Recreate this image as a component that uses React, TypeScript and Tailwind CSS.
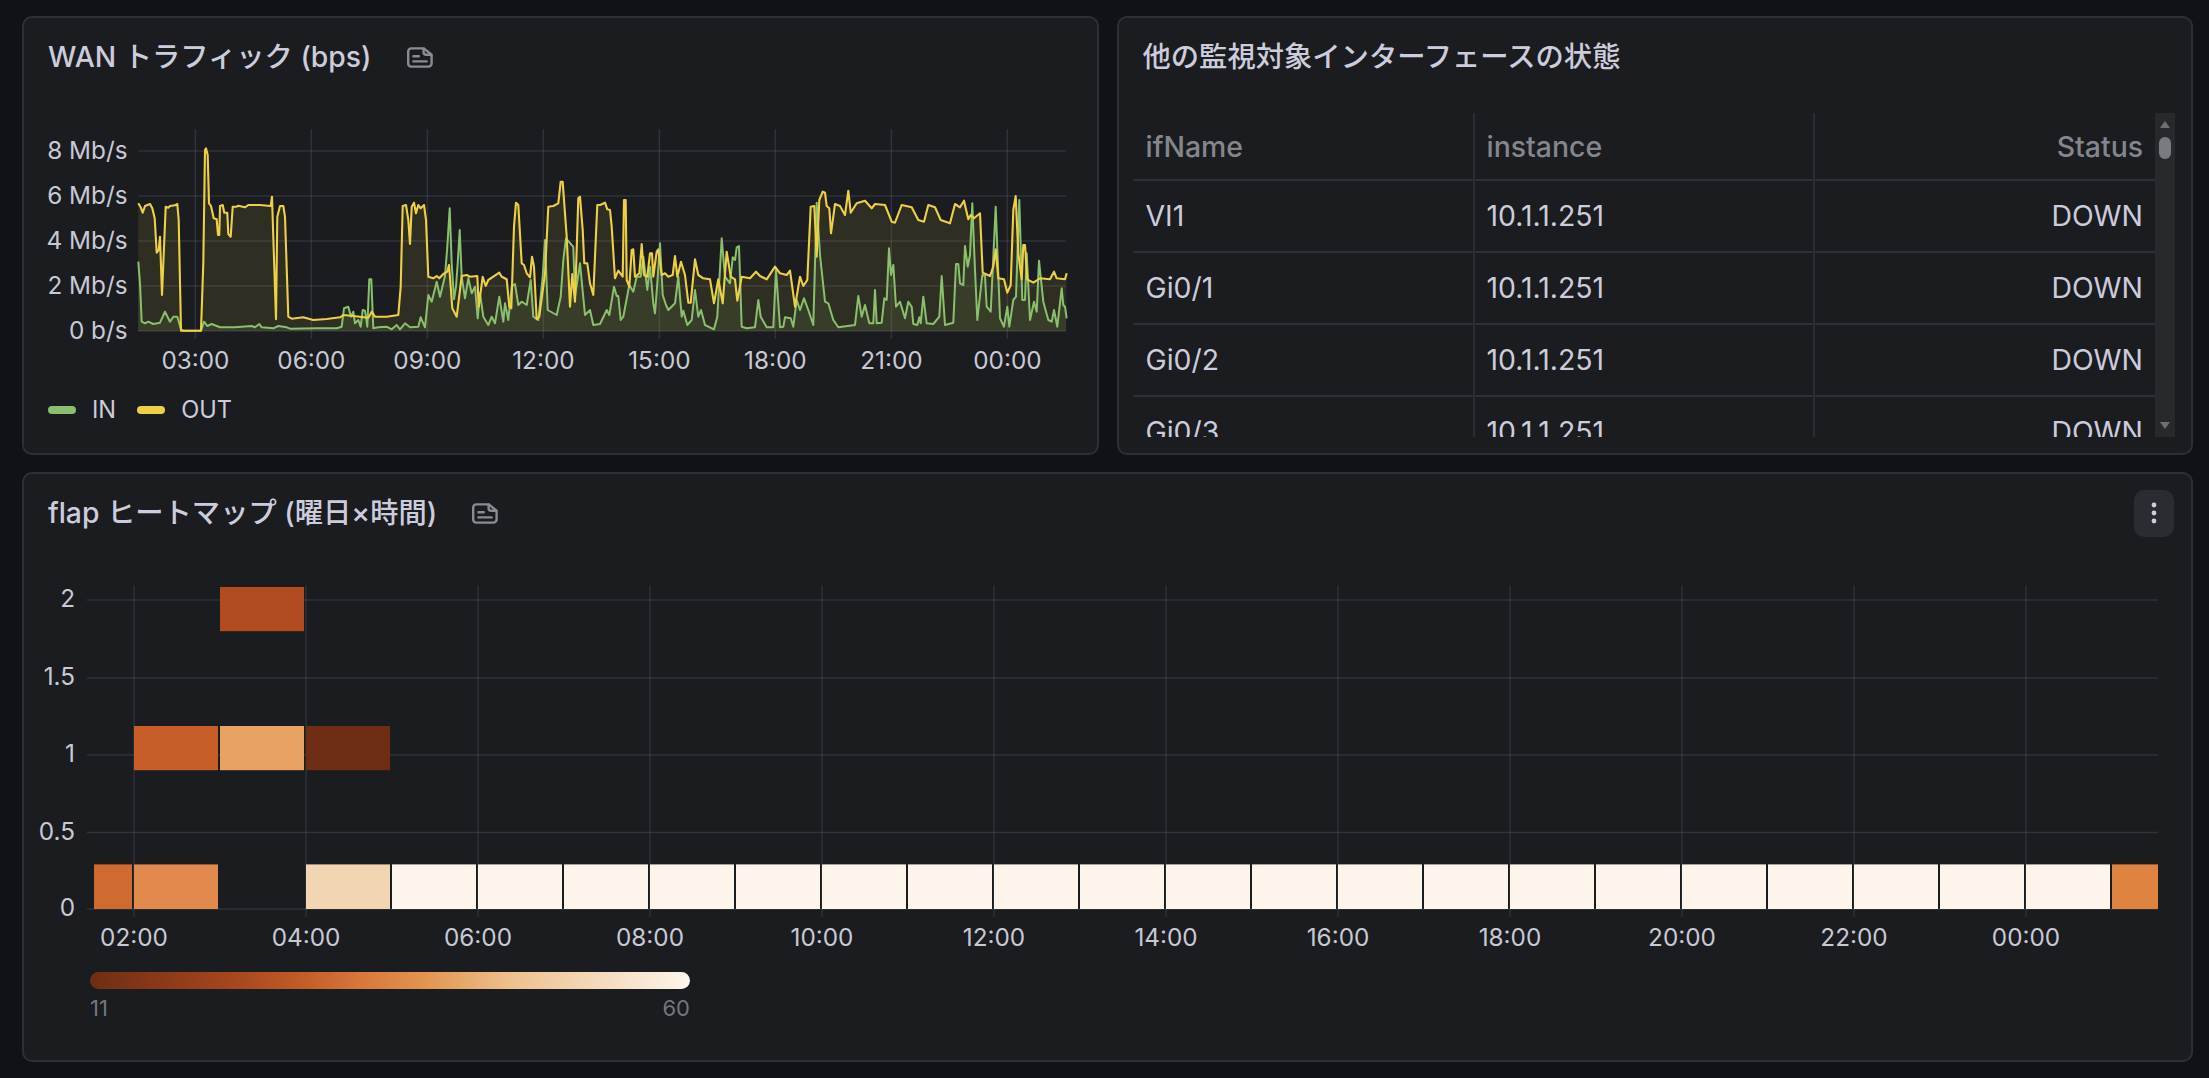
import React from 'react';

// traced from the WAN chart, [x, y] pairs in two 3x strips
const OUT_A = [55,250,62,262,68,278,75,258,90,252,97,265,104,295,110,398,116,390,120,350,126,525,137,260,145,263,150,258,165,256,172,252,176,300,183,632,243,632,250,430,255,90,258,85,263,105,267,250,273,258,281,295,290,298,294,345,298,345,300,258,308,255,313,278,322,278,325,342,332,350,338,260,350,260,355,257,375,262,385,255,420,255,452,258,456,230,460,350,468,598,472,290,480,258,490,258,495,290,505,590,515,596,550,592,580,600,620,597,660,592,670,585,700,588,745,593,755,575,765,590,800,590,835,585,842,500,848,258,858,255,865,300,870,372,875,260,882,248,888,280,895,255,902,265,912,255,918,300,925,470,940,475,950,468,958,475,970,462,982,455,987,435,992,500,997,565,1010,590,1025,468,1040,465,1050,470,1072,468,1076,560,1088,470,1097,498,1105,480,1120,470,1138,458,1145,470,1160,478,1168,560,1174,565,1182,320,1188,248,1195,255,1205,430,1212,435,1220,460,1230,472,1236,410,1242,440,1250,598,1258,590,1275,460,1285,260,1300,258,1315,250,1322,185,1328,185,1332,240,1340,350,1350,560,1357,462,1365,545,1375,235,1380,230,1388,330,1393,430,1402,430,1410,490,1420,525,1432,255];
const OUT_B = [0,255,15,248,22,268,30,270,35,320,45,475,55,452,68,470,72,240,77,240,80,480,88,500,95,390,100,388,105,470,118,460,125,372,132,465,142,470,150,400,156,400,160,470,170,395,175,388,185,465,195,460,205,470,218,465,225,408,232,470,243,425,255,465,265,548,272,548,285,418,295,465,310,475,330,478,342,550,355,478,368,550,380,395,392,470,405,478,412,542,425,470,450,475,468,455,480,468,500,478,525,440,540,460,560,465,570,452,585,560,600,470,610,498,622,480,632,260,643,258,650,410,658,240,668,215,675,218,680,258,688,265,693,340,705,252,720,258,735,285,745,212,752,278,770,250,795,242,815,265,825,252,855,255,875,305,885,308,905,255,935,262,955,300,972,305,985,255,1005,262,1022,300,1050,310,1065,252,1080,262,1092,242,1105,298,1112,285,1122,295,1140,280,1148,458,1170,468,1180,440,1187,388,1195,475,1212,478,1222,518,1232,495,1240,270,1247,228,1255,400,1265,478,1270,375,1275,375,1282,478,1300,488,1320,475,1350,478,1362,455,1370,475,1395,478,1400,460];
const IN_A = [55,425,60,490,65,605,75,610,85,605,100,612,120,608,135,575,150,605,160,590,172,590,183,628,190,632,243,632,252,605,262,618,275,612,300,622,345,622,395,618,405,622,418,612,425,622,460,625,475,618,500,622,510,626,590,625,650,625,665,620,672,565,685,560,693,590,700,575,705,610,715,600,722,620,728,570,735,572,742,620,748,478,754,478,760,625,775,622,800,620,815,628,830,615,840,628,855,610,870,622,895,620,902,592,915,622,925,525,935,545,950,485,960,530,975,468,982,380,989,265,995,430,1002,538,1008,500,1013,430,1019,330,1025,470,1035,535,1045,475,1055,520,1065,500,1073,595,1080,520,1090,590,1105,615,1115,590,1125,610,1138,530,1150,605,1155,550,1165,600,1175,500,1185,492,1195,555,1205,545,1220,555,1232,480,1240,590,1255,600,1268,470,1275,360,1283,570,1310,585,1322,530,1330,420,1338,355,1355,375,1360,380,1365,530,1380,430,1395,585,1410,570,1420,615];
const IN_B = [0,612,20,570,28,585,42,500,50,528,55,528,62,600,70,590,88,495,100,515,110,470,122,470,130,410,142,510,150,440,160,550,165,580,172,490,180,370,188,525,198,555,205,570,225,550,235,470,245,590,250,572,262,615,275,600,285,510,295,590,303,570,315,615,342,628,352,590,365,355,375,470,390,490,398,412,405,420,410,382,417,378,425,620,440,625,465,622,475,540,482,590,500,622,520,622,528,450,540,622,550,620,555,592,572,595,580,620,590,540,600,570,612,535,625,570,640,615,650,248,660,405,675,545,685,550,700,600,715,622,765,615,775,528,785,590,795,555,808,610,820,610,825,510,830,610,845,608,853,535,860,540,867,385,873,465,880,435,888,560,900,545,915,595,925,545,935,560,940,612,952,615,958,592,962,610,970,530,980,610,1000,612,1018,590,1025,468,1035,615,1060,608,1068,432,1075,432,1080,490,1090,495,1095,378,1103,440,1110,405,1117,250,1125,450,1132,600,1147,465,1155,468,1160,560,1172,575,1187,260,1200,595,1212,620,1222,560,1228,620,1240,540,1248,530,1258,240,1267,540,1275,540,1280,400,1290,600,1302,545,1310,575,1317,422,1330,545,1345,600,1355,605,1362,570,1372,620,1385,505,1390,555,1395,560,1400,595];

function toPoints(a: number[], b: number[]) {
  const out: string[] = [];
  for (let i = 0; i < a.length; i += 2) out.push(`${(120 + a[i] / 3).toFixed(1)},${(120 + a[i + 1] / 3).toFixed(1)}`);
  for (let i = 0; i < b.length; i += 2) out.push(`${(600 + b[i] / 3).toFixed(1)},${(120 + b[i + 1] / 3).toFixed(1)}`);
  return out.join(' ');
}

const outLine = toPoints(OUT_A, OUT_B);
const inLine = toPoints(IN_A, IN_B);

const GRID = '#f0faff';
const LABEL = '#c8c9d5';

const WAN_Y = [['8 Mb/s', 151], ['6 Mb/s', 196], ['4 Mb/s', 241], ['2 Mb/s', 286], ['0 b/s', 331]] as const;
const WAN_X = ['03:00', '06:00', '09:00', '12:00', '15:00', '18:00', '21:00', '00:00'];

const HEAT_Y = [['2', 600], ['1.5', 678], ['1', 755], ['0.5', 832.5], ['0', 909]] as const;
const HEAT_X = ['02:00', '04:00', '06:00', '08:00', '10:00', '12:00', '14:00', '16:00', '18:00', '20:00', '22:00', '00:00'];

// k = hour slot counted from 02:00
const HEAT_CELLS: { k: number; row: number; color: string }[] = [
  { k: 1, row: 2, color: '#b04c20' },
  { k: 0, row: 1, color: '#c75e29' },
  { k: 1, row: 1, color: '#e8a263' },
  { k: 2, row: 1, color: '#6f2d13' },
  { k: 0, row: 0, color: '#e28a4d' },
  { k: 2, row: 0, color: '#f2d5b3' },
  ...Array.from({ length: 20 }, (_, i) => ({ k: i + 3, row: 0, color: '#fdf5ec' })),
  { k: 23, row: 0, color: '#de8340' },
];
const ROW_TOP: Record<number, number> = { 2: 587, 1: 726, 0: 864.4 };

const ROWS = ['VI1', 'Gi0/1', 'Gi0/2', 'Gi0/3'];

function NoteIcon() {
  return (
    <svg viewBox="0 0 26 21" className="w-[26px] h-[21px] shrink-0" fill="none" stroke="#8b8c92" strokeWidth="2.4" strokeLinecap="round" strokeLinejoin="round">
      <path d="M4.2 1.4h12.6l7.8 6.4v8.6a3.2 3.2 0 0 1-3.2 3.2H4.2A3 3 0 0 1 1.2 16.4V4.4a3 3 0 0 1 3-3z" />
      <path d="M16.6 1.6v3.6a2.6 2.6 0 0 0 2.6 2.6h5" />
      <path d="M6.4 9.2h5.4M6.4 14.4h13.2" />
    </svg>
  );
}

function Panel({ title, note, className, children, menu }: { title: string; note?: boolean; className: string; children: React.ReactNode; menu?: boolean }) {
  return (
    <section className={`rounded-[10px] border-2 border-[#2d2f34] bg-[#1a1c20] flex flex-col ${className}`}>
      <header className="h-[78px] shrink-0 flex items-center pl-[24px] pr-[17px]">
        <h2 className="text-[28.3px] font-medium text-[#ccccdc] leading-none whitespace-nowrap">{title}</h2>
        {note && <span className="ml-[35px] flex"><NoteIcon /></span>}
        {menu && (
          <button className="ml-auto w-[40px] h-[47px] rounded-[10px] bg-[#2a2c31] flex items-center justify-center">
            <svg viewBox="0 0 6 22" className="w-[6px] h-[22px]" fill="#ccccdc">
              <circle cx="3" cy="3" r="2.4" />
              <circle cx="3" cy="11" r="2.4" />
              <circle cx="3" cy="19" r="2.4" />
            </svg>
          </button>
        )}
      </header>
      {children}
    </section>
  );
}

function WanChart() {
  return (
    <svg viewBox="24 96 1073 280" className="block w-[1073px] h-[280px] shrink-0 text-[24.3px]">
      <g stroke={GRID} strokeOpacity="0.1" strokeWidth="1.5">
        {WAN_Y.map(([, y]) => <line key={y} x1="138" x2="1066" y1={y} y2={y} />)}
        {WAN_X.map((_, i) => <line key={i} x1={195.4 + i * 116} x2={195.4 + i * 116} y1="129" y2="339" />)}
      </g>
      <polygon points={`138,331 ${outLine} 1066,331`} fill="#eed045" fillOpacity="0.1" />
      <polygon points={`138,331 ${inLine} 1066,331`} fill="#8ac06d" fillOpacity="0.1" />
      <polyline points={inLine} fill="none" stroke="#8ac06d" strokeWidth="2" strokeLinejoin="round" />
      <polyline points={outLine} fill="none" stroke="#eed045" strokeWidth="2.1" strokeLinejoin="round" />
      <g fill={LABEL}>
        {WAN_Y.map(([t, y]) => <text key={t} x="127.5" y={y - 1.5} textAnchor="end" dominantBaseline="central">{t}</text>)}
        {WAN_X.map((t, i) => <text key={t} x={195.4 + i * 116} y="360" textAnchor="middle" dominantBaseline="central">{t}</text>)}
      </g>
    </svg>
  );
}

function HeatChart() {
  return (
    <svg viewBox="24 552 2167 398" className="block w-[2167px] h-[398px] shrink-0 text-[24.3px]">
      <g stroke={GRID} strokeOpacity="0.1" strokeWidth="1.3">
        {HEAT_Y.map(([, y]) => <line key={y} x1="87" x2="2158" y1={y} y2={y} />)}
        {HEAT_X.map((_, i) => <line key={i} x1={134 + i * 172} x2={134 + i * 172} y1="585" y2="917" />)}
      </g>
      <rect x="94" y="864.4" width="38" height="44.6" fill="#cf6b30" />
      {HEAT_CELLS.map((c) => (
        <rect key={`${c.k}-${c.row}`} x={134 + c.k * 86} y={ROW_TOP[c.row]} width={c.k === 23 ? 46 : 84} height={c.row === 0 ? 44.6 : 44.2} fill={c.color} />
      ))}
      <g fill={LABEL}>
        {HEAT_Y.map(([t, y]) => <text key={t} x="75" y={y - 2} textAnchor="end" dominantBaseline="central">{t}</text>)}
        {HEAT_X.map((t, i) => <text key={t} x={134 + i * 172} y="937" textAnchor="middle" dominantBaseline="central">{t}</text>)}
      </g>
    </svg>
  );
}

function StatusTable() {
  const cell = 'pl-[12px] first:pl-[13px] pr-[12px] border-r-2 border-[#2a2c31] last:border-r-0';
  return (
    <div className="mt-[17px] ml-[14px] mr-[16px] h-[324px] flex">
      <div className="flex-1 min-w-0 overflow-hidden">
        <table className="w-full table-fixed border-collapse text-[28.4px] text-[#ccccdc]">
          <colgroup>
            <col className="w-[341px]" />
            <col className="w-[340px]" />
            <col />
          </colgroup>
          <thead>
            <tr className="h-[67px] border-b-2 border-[#2d2f34] text-[#85868d]">
              <th className={`${cell} pt-[3px] text-left font-medium`}>ifName</th>
              <th className={`${cell} pt-[3px] text-left font-medium`}>instance</th>
              <th className={`${cell} pt-[3px] text-right font-medium`}>Status</th>
            </tr>
          </thead>
          <tbody>
            {ROWS.map((name) => (
              <tr key={name} className="h-[72px] border-b-2 border-[#2d2f34]">
                <td className={cell}>{name}</td>
                <td className={cell}>10.1.1.251</td>
                <td className={`${cell} text-right`}>DOWN</td>
              </tr>
            ))}
          </tbody>
        </table>
      </div>
      <div className="w-[20px] shrink-0 bg-[#27292d] flex flex-col items-center pt-[8px] pb-[8px]">
        <svg viewBox="0 0 10 7" className="w-[10px] h-[7px]" fill="#6f7074"><path d="M5 0l5 7H0z" /></svg>
        <div className="mt-[9px] w-[12px] h-[22px] rounded-full bg-[#7a7b80]" />
        <svg viewBox="0 0 10 7" className="mt-auto w-[10px] h-[7px]" fill="#6f7074"><path d="M5 7L0 0h10z" /></svg>
      </div>
    </div>
  );
}

export default function App() {
  return (
    <div className="min-h-screen bg-[#111217] pt-[16px] pl-[22px] pr-[16px] font-['Inter','Noto_Sans_CJK_JP',sans-serif]">
      <div className="grid grid-cols-2 gap-x-[18px] gap-y-[17px]">
        <Panel title="WAN トラフィック (bps)" note className="h-[439px]">
          <WanChart />
          <div className="mt-[16px] ml-[24px] flex items-center text-[23.6px] text-[#ccccdc]">
            <span className="w-[28px] h-[8px] rounded-full bg-[#8ac06d]" />
            <span className="ml-[16px]">IN</span>
            <span className="ml-[21px] w-[28px] h-[8px] rounded-full bg-[#eed045]" />
            <span className="ml-[16px]">OUT</span>
          </div>
        </Panel>
        <Panel title="他の監視対象インターフェースの状態" className="h-[439px]">
          <StatusTable />
        </Panel>
        <Panel title="flap ヒートマップ (曜日×時間)" note menu className="col-span-2 h-[590px]">
          <HeatChart />
          <div className="ml-[66px] mt-[22px] w-[600px]">
            <div className="h-[17px] rounded-full bg-[linear-gradient(90deg,#6f2d13,#a8481f_25%,#c45e29_36%,#d87a3d_46%,#e29550_56%,#eec08e_70%,#f2d5b3_82%,#fdf5ec)]" />
            <div className="mt-[5px] flex justify-between text-[22px] leading-[28px] text-[#75767d]">
              <span>11</span>
              <span>60</span>
            </div>
          </div>
        </Panel>
      </div>
    </div>
  );
}
